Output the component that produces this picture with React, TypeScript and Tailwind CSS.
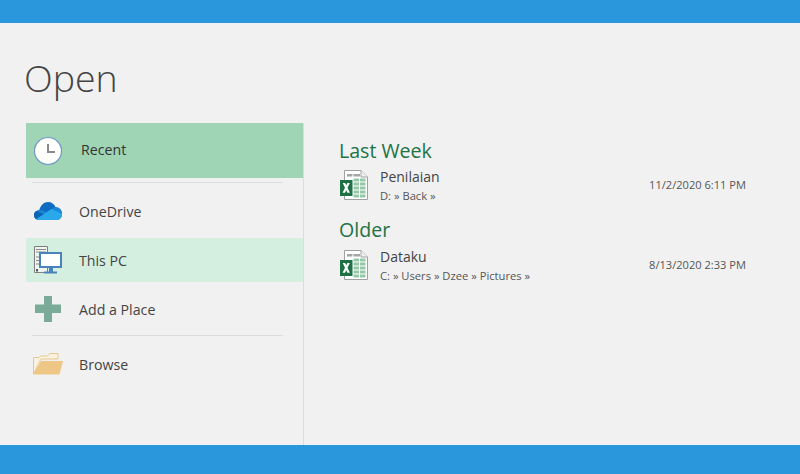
const font = "font-['Open_Sans','Noto_Sans',sans-serif]";

function ClockIcon() {
  return (
    <svg width="30" height="30" viewBox="0 0 30 30">
      <circle cx="15" cy="15" r="13.5" fill="#fff" stroke="#6f97c8" strokeWidth="1.2" />
      <path d="M15 8v8h7" fill="none" stroke="#8a8a8a" strokeWidth="2" />
    </svg>
  );
}

function CloudIcon() {
  return (
    <svg width="28" height="18" viewBox="0 0 28 18">
      <path d="M5 18C2 18 0 15.800 0 13.300 0 10.500 2.200 8.300 5.200 8.300 6.500 3.500 10 0 14 0c3.500 0 6.300 2 7.600 5.200C25.300 5 28 8 28 12c0 3.500-2.200 6-5.500 6Z" fill="#0f6cc0" />
      <path d="M5.200 8.300c3-.3 5 .7 7 2.300l5.300-3.600c1.200-.9 2.600-1.800 4.100-1.800C25.300 5 28 8 28 12l-15 6H5C2 18 0 15.800 0 13.300 0 10.500 2.200 8.300 5.200 8.300Z" fill="#1b87d8" />
      <path d="M2.400 17C.9 16 0 14.800 0 13.300 0 11.500 1 9.900 2.500 9L12 13Z" fill="#0c64b4" />
      <path d="M2.400 17 17.500 7 28 12c0 3.500-2.200 6-5.500 6H5c-1 0-1.800-.3-2.600-1Z" fill="#2aa8ec" />
    </svg>
  );
}

function PcIcon() {
  return (
    <svg width="30" height="30" viewBox="0 0 30 30">
      <path d="M1.500 1.500h13v26h-13Z" fill="#eef5f0" stroke="#7f7f7f" strokeWidth="1" />
      <path d="M3 4.500h10M3 7h10M3 12h3M3 15.500h3M3 19h3" stroke="#8a8a8a" strokeWidth="1" />
      <path d="M3 24h2v2.500H3Z" fill="#555" />
      <rect x="7" y="8" width="21" height="14" fill="#fff" stroke="#4a82bd" strokeWidth="2" />
      <path d="M16 23h4v4h-4ZM11 26.500h13v2H11Z" fill="#4a82bd" />
    </svg>
  );
}

function PlusIcon() {
  return (
    <svg width="26" height="26" viewBox="0 0 26 26">
      <path d="M9 0h8v8.500h9v8.500h-9v9H9v-9H0V8.500h9Z" fill="#7aab98" />
    </svg>
  );
}

function FolderIcon() {
  return (
    <svg width="30" height="22" viewBox="0 0 30 22">
      <path d="M.5 21V4.500h5.500l1.500-1.500h7L17 .5h8V6H8Z" fill="#f9f2e2" stroke="#e9c78b" strokeWidth="1" />
      <path d="M0 21.500 8 8h22l-3.500 13.500Z" fill="#eec787" />
    </svg>
  );
}

function ExcelIcon() {
  return (
    <svg width="28" height="30" viewBox="0 0 28 30">
      <path d="M4.500.5h16.500l6.500 6.500v22.500H4.500Z" fill="#fff" stroke="#a0a0a0" strokeWidth="1" />
      <path d="M21 .5V7h6.500" fill="#f1f1f1" stroke="#a0a0a0" strokeWidth="1" />
      <path d="M7 4h5.500v2.500H7ZM13.500 4H20v2.500h-6.500Z" fill="#a5a5a5" />
      <path d="M13.500 8.500h5.500v3h-5.500ZM20 8.500h5.500v3H20ZM13.500 12.500h5.500v3h-5.500ZM20 12.500h5.500v3H20ZM13.500 16.500h5.500v3h-5.500ZM20 16.500h5.500v3H20ZM13.500 20.500h5.500v3h-5.500ZM20 20.500h5.500v3H20ZM13.500 24.500h5.500v3h-5.500ZM20 24.500h5.500v3H20Z" fill="#93c9a8" />
      <path d="M0 10h12.500v16H0Z" fill="#1e7145" />
      <path d="M2.700 13h2.500l1.100 2.300L7.400 13h2.400l-2.300 4.800 2.400 5H7.400l-1.200-2.500L5 22.800H2.600l2.400-5Z" fill="#fff" />
    </svg>
  );
}

function NavRow({ icon, label, className }: { icon: React.ReactNode; label: string; className?: string }) {
  return (
    <div className={`flex items-center ${className ?? ""}`}>
      <div className="flex w-[44px] justify-center">{icon}</div>
      <span className="ml-[9px] pt-[2px] text-[14.2px] text-[#444]">{label}</span>
    </div>
  );
}

function RecentFile({ name, path, date }: { name: string; path: string; date: string }) {
  return (
    <div className="mt-[3px] flex h-[37px] items-center pr-[54px]">
      <div className="mb-px h-[30px] w-[41px] pl-px"><ExcelIcon /></div>
      <div className="flex-1">
        <p className="text-[14px] leading-[20px] text-[#444]">{name}</p>
        <p className="mt-px text-[11.2px] leading-[16px] text-[#555]">{path}</p>
      </div>
      <span className="text-[11.1px] text-[#555]">{date}</span>
    </div>
  );
}

export default function App() {
  return (
    <div className={`flex h-[474px] w-[800px] flex-col overflow-hidden bg-[#f1f1f1] ${font}`}>
      <div className="h-[23px] bg-[#2a96dc]"></div>

      <h1 className="ml-[24px] mt-[27px] h-[73px] text-[37.5px] font-light leading-[56px] text-[#444]">Open</h1>

      <div className="flex flex-1">
        {/* Left nav */}
        <div className="w-[304px] border-r border-[#dcdcdc] pl-[26px]">
          <div className="flex h-[55px] items-center bg-[#9fd5b5]">
            <div className="flex w-[44px] justify-center"><ClockIcon /></div>
            <span className="ml-[11px] pb-[2px] text-[14.2px] text-[#333]">Recent</span>
          </div>
          <div className="ml-[6px] mr-[20px] mt-[4px] h-px bg-[#dcdcdc]"></div>
          <NavRow icon={<CloudIcon />} label="OneDrive" className="h-[55px]" />
          <NavRow icon={<PcIcon />} label="This PC" className="h-[44px] bg-[#d4efe0]" />
          <NavRow icon={<PlusIcon />} label="Add a Place" className="h-[53px]" />
          <div className="ml-[6px] mr-[20px] h-px bg-[#dcdcdc]"></div>
          <NavRow icon={<FolderIcon />} label="Browse" className="h-[56px]" />
        </div>

        {/* Recent list */}
        <div className="flex-1 pl-[35px] pt-[14px]">
          <h2 className="text-[19.6px] leading-[27px] text-[#217346]">Last Week</h2>
          <RecentFile name="Penilaian" path="D: » Back »" date="11/2/2020 6:11 PM" />
          <h2 className="mt-[12px] text-[19.6px] leading-[28px] text-[#217346]">Older</h2>
          <RecentFile name="Dataku" path="C: » Users » Dzee » Pictures »" date="8/13/2020 2:33 PM" />
        </div>
      </div>

      <div className="h-[29px] bg-[#2a96dc]"></div>
    </div>
  );
}
